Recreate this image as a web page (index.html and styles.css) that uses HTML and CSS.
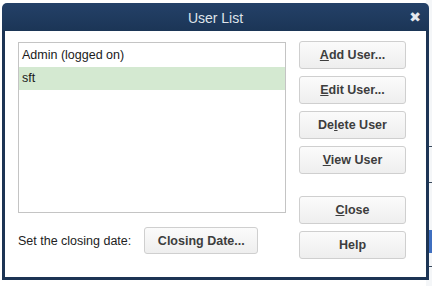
FILE: index.html
```html
<!DOCTYPE html>
<html>
<head>
<meta charset="utf-8">
<link rel="stylesheet" href="styles.css">
</head>
<body>
<div class="backdrop">
  <span class="bg-line l1"></span>
  <span class="bg-line l2"></span>
  <span class="bg-band b1"></span>
  <span class="bg-line l3"></span>
</div>
<div class="dialog">
  <div class="titlebar">
    <span class="title">User List</span>
    <span class="close-x">&#10006;</span>
  </div>
  <div class="body">
    <div class="left">
      <div class="list">
        <div class="row">Admin (logged on)</div>
        <div class="row selected">sft</div>
      </div>
      <div class="closing">
        <span class="label">Set the closing date:</span>
        <button class="btn date-btn">Closing Date...</button>
      </div>
    </div>
    <div class="right">
      <button class="btn"><u>A</u>dd User...</button>
      <button class="btn"><u>E</u>dit User...</button>
      <button class="btn">De<u>l</u>ete User</button>
      <button class="btn"><u>V</u>iew User</button>
      <button class="btn spaced"><u>C</u>lose</button>
      <button class="btn">Help</button>
    </div>
  </div>
</div>
</body>
</html>
```
FILE: styles.css
```css
html, body {
  margin: 0;
  padding: 0;
  background: #ffffff;
  font-family: "Liberation Sans", Arial, sans-serif;
  font-size: 12.5px;
  color: #222;
}
body {
  position: relative;
  width: 432px;
  height: 286px;
  overflow: hidden;
}
.backdrop {
  position: absolute;
  left: 426px;
  top: 0;
  width: 6px;
  height: 286px;
  background: #f4f6f8;
}
.bg-line {
  position: absolute;
  left: 0;
  width: 6px;
  height: 1px;
  background: #3a4a5c;
}
.l1 { top: 146px; }
.l2 { top: 182px; }
.l3 { top: 266px; }
.bg-band {
  position: absolute;
  left: 0;
  top: 230px;
  width: 6px;
  height: 23px;
  background: #3f6fc0;
}
.dialog {
  position: relative;
  margin: 3px 0 0 2px;
  width: 427px;
  height: 277px;
  display: flex;
  flex-direction: column;
}
.titlebar {
  height: 28px;
  background: linear-gradient(#244168, #1b3556);
  border-radius: 5px 5px 0 0;
  display: flex;
  align-items: center;
  justify-content: center;
  position: relative;
}
.title {
  color: #dfe4ea;
  font-size: 14px;
  padding-top: 1px;
}
.close-x {
  position: absolute;
  right: 8px;
  top: 6px;
  color: #e4e8ee;
  font-size: 14px;
  font-weight: bold;
  font-family: "DejaVu Sans", sans-serif;
}
.body {
  flex: 1;
  background: #fff;
  border: 3px solid #1c3454;
  border-top: none;
  display: flex;
  padding: 10px 0 0 13px;
  gap: 13px;
}
.left {
  width: 268px;
  display: flex;
  flex-direction: column;
}
.list {
  margin-top: 1px;
  height: 168px;
  border: 1px solid #c4c4c4;
  padding-top: 1px;
}
.row {
  height: 23px;
  line-height: 23px;
  padding-left: 3px;
  color: #1a1a1a;
}
.row.selected {
  background: #d4e9d1;
}
.closing {
  margin-top: 14px;
  display: flex;
  align-items: center;
  gap: 13px;
}
.label {
  color: #222;
}
.btn {
  font-family: "Liberation Sans", Arial, sans-serif;
  font-size: 12.5px;
  font-weight: bold;
  color: #3d3d3d;
  background: linear-gradient(#fbfbfb, #eeeeee);
  border: 1px solid #cfcfcf;
  border-radius: 3px;
  height: 28px;
  padding: 0;
  margin: 0;
}
.btn u {
  text-decoration: underline;
}
.date-btn {
  width: 114px;
  height: 27px;
}
.right {
  width: 107px;
  display: flex;
  flex-direction: column;
  gap: 7px;
}
.right .btn {
  width: 107px;
}
.right .spaced {
  margin-top: 15px;
}
```
